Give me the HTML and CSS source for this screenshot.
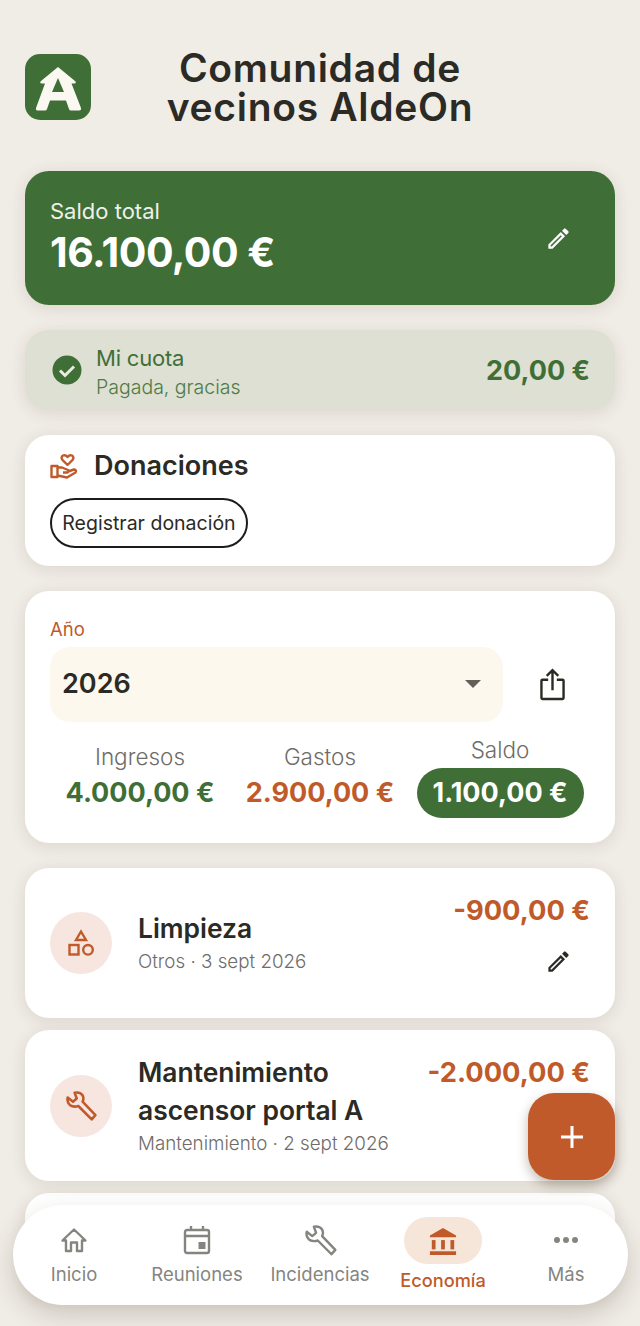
FILE: index.html
```html
<!DOCTYPE html>
<html lang="es">
<head>
<meta charset="utf-8">
<title>Comunidad de vecinos AldeOn</title>
<link rel="stylesheet" href="styles.css">
</head>
<body>
<main class="page">
  <header class="header">
    <svg class="logo" viewBox="0 0 66 66">
      <rect width="66" height="66" rx="15" fill="#3f6f36"/>
      <path d="M33 13 L50 27 Q52 29.500 49 29.500 L46.500 29.500 L56 54 Q56.500 56.500 54 56.500 L46 56.500 Q44.500 56.500 44 55 L41 46.500 L25 46.500 L22 55 Q21.500 56.500 20 56.500 L12.500 56.500 Q10.500 56.500 11 54 L20 29.500 L17 29.500 Q14 29.500 16 27 Z" fill="#fbf8f1"/>
      <path d="M33 24 L39 38 L27 38 Z" fill="#3f6f36"/>
    </svg>
    <h1 class="title">Comunidad de<br>vecinos AldeOn</h1>
  </header>

  <section class="card balance">
    <div class="balance-text">
      <div class="balance-label">Saldo total</div>
      <div class="balance-value">16.100,00 €</div>
    </div>
    <svg class="icon-24 pencil-light" viewBox="0 0 24 24"><path d="M3 17.250V21h3.750L17.810 9.940l-3.750-3.750L3 17.250zM5.920 19H5v-.920l9.060-9.060.920.920L5.920 19zM20.710 7.040a1 1 0 0 0 0-1.410l-2.340-2.340a1 1 0 0 0-1.410 0l-1.830 1.830 3.750 3.750 1.830-1.830z"/></svg>
  </section>

  <section class="card fee">
    <svg class="check" viewBox="0 0 30 30"><circle cx="15" cy="15" r="14.500" fill="#3f6f36"/><path d="M8 15.500l5 5 9-9" fill="none" stroke="#e9ece1" stroke-width="3"/></svg>
    <div class="fee-text">
      <div class="fee-title">Mi cuota</div>
      <div class="fee-sub">Pagada, gracias</div>
    </div>
    <div class="fee-amount">20,00 €</div>
  </section>

  <section class="card donations">
    <div class="don-head">
      <svg class="don-icon" viewBox="0 0 28 28" fill="none" stroke="#c05a2a" stroke-width="2.400" stroke-linejoin="round">
        <path d="M17.500 13 L12.500 8 Q10.500 5 13 3.500 Q15.500 2.500 17.500 5 Q19.500 2.500 22 3.500 Q24.500 5 22.500 8 Z"/>
        <rect x="1.500" y="14" width="6" height="11"/>
        <path d="M7.500 15.500 H12 L18 18 Q19.500 19.500 17.500 20.500 H13 M18 19.500 L24 17.500 Q27 18 25.500 20.500 L17 25.500 L7.500 23.500"/>
      </svg>
      <h2 class="don-title">Donaciones</h2>
    </div>
    <button class="pill-btn">Registrar donación</button>
  </section>

  <section class="card year">
    <div class="year-label">Año</div>
    <div class="year-row">
      <div class="select">
        <span>2026</span>
        <span class="caret"></span>
      </div>
      <svg class="share" viewBox="0 0 26 36" fill="none" stroke="#2b2a25" stroke-width="2.500">
        <path d="M8.500 13 H2.500 Q1.500 13 1.500 14 V32 Q1.500 33 2.500 33 H23.500 Q24.500 33 24.500 32 V14 Q24.500 13 23.500 13 H17.500"/>
        <path d="M13 24 V3.500 M7 9 L13 3 L19 9"/>
      </svg>
    </div>
    <div class="stats">
      <div class="stat">
        <div class="stat-label">Ingresos</div>
        <div class="stat-value green">4.000,00 €</div>
      </div>
      <div class="stat">
        <div class="stat-label">Gastos</div>
        <div class="stat-value orange">2.900,00 €</div>
      </div>
      <div class="stat stat-main">
        <div class="stat-label">Saldo</div>
        <div class="stat-value total">1.100,00 €</div>
      </div>
    </div>
  </section>

  <section class="card item item-one">
    <div class="item-circle">
      <svg class="icon-30" viewBox="0 0 30 30" fill="none" stroke="#c05a2a" stroke-width="2.400">
        <path d="M15 3.500 L20 12 H10 Z"/>
        <rect x="3.500" y="17" width="9" height="9.500"/>
        <circle cx="22" cy="21.800" r="4.800"/>
      </svg>
    </div>
    <div class="item-text">
      <div class="item-title">Limpieza</div>
      <div class="item-sub">Otros · 3 sept 2026</div>
    </div>
    <div class="item-side">
      <div class="item-amount">-900,00 €</div>
      <svg class="icon-24 pencil-dark" viewBox="0 0 24 24"><path d="M3 17.250V21h3.750L17.810 9.940l-3.750-3.750L3 17.250zM5.920 19H5v-.920l9.060-9.060.920.920L5.920 19zM20.710 7.040a1 1 0 0 0 0-1.410l-2.340-2.340a1 1 0 0 0-1.410 0l-1.830 1.830 3.750 3.750 1.830-1.830z"/></svg>
    </div>
  </section>

  <section class="card item item-two">
    <div class="item-circle">
      <svg class="icon-32" viewBox="0 0 30 30" fill="none" stroke="#c05a2a" stroke-width="2.400" stroke-linejoin="round">
        <path d="M9 2.500 Q14 1.500 16.500 5 Q18 8 16.500 11 L28.500 23.500 L25 27.500 L12.500 15 Q8 16.500 4.500 14 Q1.500 11 2.500 7 L7.500 11 L11 8 Z"/>
      </svg>
    </div>
    <div class="item-text">
      <div class="item-title">Mantenimiento<br>ascensor portal A</div>
      <div class="item-sub">Mantenimiento · 2 sept 2026</div>
    </div>
    <div class="item-side">
      <div class="item-amount">-2.000,00 €</div>
    </div>
  </section>

  <section class="card item-peek"></section>
</main>

<button class="fab" aria-label="Añadir">
  <svg viewBox="0 0 24 24" class="fab-plus"><path d="M10.500 1h3v22h-3zM1 10.500h22v3H1z"/></svg>
</button>

<nav class="nav">
  <a class="nav-item">
    <span class="nav-icon">
      <svg viewBox="0 0 28 28" class="nav-svg" fill="none" stroke="#85857f" stroke-width="2.400" stroke-linejoin="round">
        <path d="M2.500 14.500 L14 3.500 L25.500 14.500 H22 V25 H17 V16.500 H11 V25 H6 V14.500 Z"/>
      </svg>
    </span>
    <span class="nav-label">Inicio</span>
  </a>
  <a class="nav-item">
    <span class="nav-icon">
      <svg viewBox="0 0 28 30" class="nav-svg nav-tall" fill="none" stroke="#85857f" stroke-width="2.400">
        <rect x="2" y="5" width="24" height="23" rx="2"/>
        <path d="M2 11 H26 M8 1 V6 M20 1 V6"/>
        <rect x="15.500" y="17" width="7" height="7" fill="#85857f" stroke="none"/>
      </svg>
    </span>
    <span class="nav-label">Reuniones</span>
  </a>
  <a class="nav-item">
    <span class="nav-icon">
      <svg viewBox="0 0 30 30" class="nav-svg nav-wrench" fill="none" stroke="#85857f" stroke-width="2.200" stroke-linejoin="round">
        <path d="M9 2.500 Q14 1.500 16.500 5 Q18 8 16.500 11 L28.500 23.500 L25 27.500 L12.500 15 Q8 16.500 4.500 14 Q1.500 11 2.500 7 L7.500 11 L11 8 Z"/>
      </svg>
    </span>
    <span class="nav-label">Incidencias</span>
  </a>
  <a class="nav-item active">
    <span class="nav-icon nav-pill">
      <svg viewBox="0 0 30 30" class="nav-svg nav-tall" fill="#c05a2a">
        <path d="M15 1 L29 9 V11 H1 V9 Z"/>
        <rect x="3" y="14" width="4" height="10"/>
        <rect x="13" y="14" width="4" height="10"/>
        <rect x="23" y="14" width="4" height="10"/>
        <rect x="1" y="26" width="28" height="4"/>
      </svg>
    </span>
    <span class="nav-label">Economía</span>
  </a>
  <a class="nav-item">
    <span class="nav-icon">
      <svg viewBox="0 0 28 28" class="nav-svg" fill="#85857f">
        <circle cx="5" cy="14" r="3"/><circle cx="14" cy="14" r="3"/><circle cx="23" cy="14" r="3"/>
      </svg>
    </span>
    <span class="nav-label">Más</span>
  </a>
</nav>
</body>
</html>
```
FILE: styles.css
```css
* { box-sizing: border-box; }
html, body { margin: 0; height: 1326px; overflow: hidden; }
body {
  background: #f0ece6;
  font-family: Inter, "Liberation Sans", sans-serif;
  color: #2b2a25;
  position: relative;
}
.page { padding: 48px 25px 0; display: flex; flex-direction: column; }
.header { display: flex; align-items: center; height: 78px; position: relative; justify-content: center; margin-bottom: 45px; }
.logo { position: absolute; left: 0; top: 6px; width: 66px; height: 66px; }
.title { margin: 0; font-size: 39px; line-height: 39px; font-weight: 600; text-align: center; letter-spacing: 0.7px; }
.card {
  background: #fff;
  border-radius: 24px;
  box-shadow: 0 3px 16px rgba(90, 80, 60, 0.14);
}
.balance {
  background: #3f6f36; color: #fff; height: 134px; padding: 0 43px 0 25px;
  display: flex; align-items: center; justify-content: space-between; margin-bottom: 25px;
}
.balance-text { padding-top: 2px; }
.balance-label { font-size: 22px; line-height: 26px; color: #eef1e8; margin-top: -3px; }
.balance-value { font-size: 41px; line-height: 50px; font-weight: 700; letter-spacing: -0.5px; margin-top: 3px; }
.icon-24 { width: 27px; height: 27px; display: block; }
.pencil-light { fill: #fff; }
.pencil-dark { fill: #2b2a25; }
.fee {
  background: #dde0d3; height: 80px; padding: 0 25px 0 27px; display: flex; align-items: center; margin-bottom: 25px;
}
.check { width: 30px; height: 30px; margin-right: 14px; }
.fee-text { flex: 1; padding-top: 3px; }
.fee-title { font-size: 22px; line-height: 26px; color: #3f6f36; letter-spacing: -0.2px; }
.fee-sub { font-size: 19.500px; line-height: 24px; color: #4f7b46; margin-top: 4px; font-weight: 300; }
.fee-amount { font-size: 27px; font-weight: 700; color: #3f6f36; }
.donations { height: 131px; padding: 14px 25px 0; margin-bottom: 25px; }
.don-head { display: flex; align-items: center; gap: 16px; height: 34px; margin-bottom: 15px; }
.don-icon { width: 28px; height: 28px; }
.don-title { margin: 0; font-size: 27px; font-weight: 600; line-height: 32px; }
.pill-btn {
  height: 50px; width: 198px; padding: 0; border: 2px solid #1d1c19; border-radius: 25px; background: #fff;
  font: 19.500px Inter, "Liberation Sans", sans-serif; color: #2b2a25; display: block;
}
.year { height: 252px; padding: 27px 25px 0; margin-bottom: 25px; }
.year-label { font-size: 18.500px; line-height: 22px; color: #c05a2a; margin-bottom: 7px; }
.year-row { display: flex; align-items: center; }
.select {
  width: 453px; height: 75px; background: #fcf8ee; border-radius: 20px; padding: 0 22px 2px 12px;
  display: flex; align-items: center; justify-content: space-between;
  font-size: 27px; font-weight: 600;
}
.caret { width: 0; height: 0; border-left: 8.500px solid transparent; border-right: 8.500px solid transparent; border-top: 8px solid #625f5a; }
.share { width: 25px; height: 35px; margin-left: 37px; }
.stats { display: grid; grid-template-columns: 180px 180px 180px; margin-top: 12px; justify-items: center; }
.stat { display: flex; flex-direction: column; align-items: center; padding-top: 9px; }
.stat-main { padding-top: 2px; }
.stat-label { font-size: 22.500px; line-height: 28px; color: #6f6c67; font-weight: 300; }
.stat-value { font-size: 27px; line-height: 34px; font-weight: 700; margin-top: 5px; letter-spacing: 0; white-space: nowrap; }
.green { color: #3f6f36; }
.orange { color: #c05a2a; }
.total { background: #3f6f36; color: #fff; height: 50px; line-height: 50px; padding: 0 16px; border-radius: 25px; margin-top: 4px; }
.item { display: flex; align-items: center; padding: 0 25px; position: relative; }
.item-one { height: 150px; margin-bottom: 12px; }
.item-two { height: 151px; margin-bottom: 12px; }
.item-circle { width: 62px; height: 62px; border-radius: 50%; background: #f6e6df; display: flex; align-items: center; justify-content: center; flex: none; margin-right: 26px; }
.icon-30 { width: 30px; height: 30px; }
.icon-32 { width: 32px; height: 32px; }
.item-text { flex: 1; padding-bottom: 3px; }
.item-title { font-size: 26.400px; line-height: 38px; font-weight: 600; }
.item-sub { font-size: 18.800px; line-height: 24px; color: #6f6c67; font-weight: 300; margin-top: 3px; }
.item-side { position: absolute; right: 25px; top: 24px; display: flex; flex-direction: column; align-items: flex-end; }
.item-amount { font-size: 27.300px; line-height: 38px; font-weight: 700; color: #c05a2a; }
.item-side .icon-24 { margin-top: 18px; margin-right: 18px; }
.item-peek { height: 100px; }
.fab {
  position: absolute; left: 528px; top: 1093px; width: 87px; height: 87px; border: 0; border-radius: 26px; background: #c05a2a;
  box-shadow: 0 5px 12px rgba(60, 40, 20, 0.32); display: flex; align-items: center; justify-content: center; padding: 0;
}
.fab-plus { width: 24px; height: 24px; fill: #fff; }
.nav {
  position: absolute; left: 12.500px; top: 1205px; width: 615px; height: 100px; background: #fff; border-radius: 50px;
  box-shadow: 0 10px 24px rgba(90, 80, 60, 0.24); display: grid; grid-template-columns: repeat(5, 123px);
}
.nav-item { display: flex; flex-direction: column; align-items: center; padding-top: 17px; color: #85857f; }
.nav-icon { height: 36px; display: flex; align-items: center; justify-content: center; }
.nav-svg { width: 28px; height: 28px; }
.nav-tall { width: 28px; height: 30px; }
.nav-wrench { width: 33px; height: 33px; }
.nav-label { font-size: 18.500px; line-height: 24px; margin-top: 4px; color: #85857f; white-space: nowrap; }
.nav-pill { width: 78px; height: 47px; background: #f6e6d9; border-radius: 24px; margin-top: -5px; }
.active .nav-label { color: #c05a2a; margin-top: 4px; font-weight: 500; font-size: 18.200px; }
```
